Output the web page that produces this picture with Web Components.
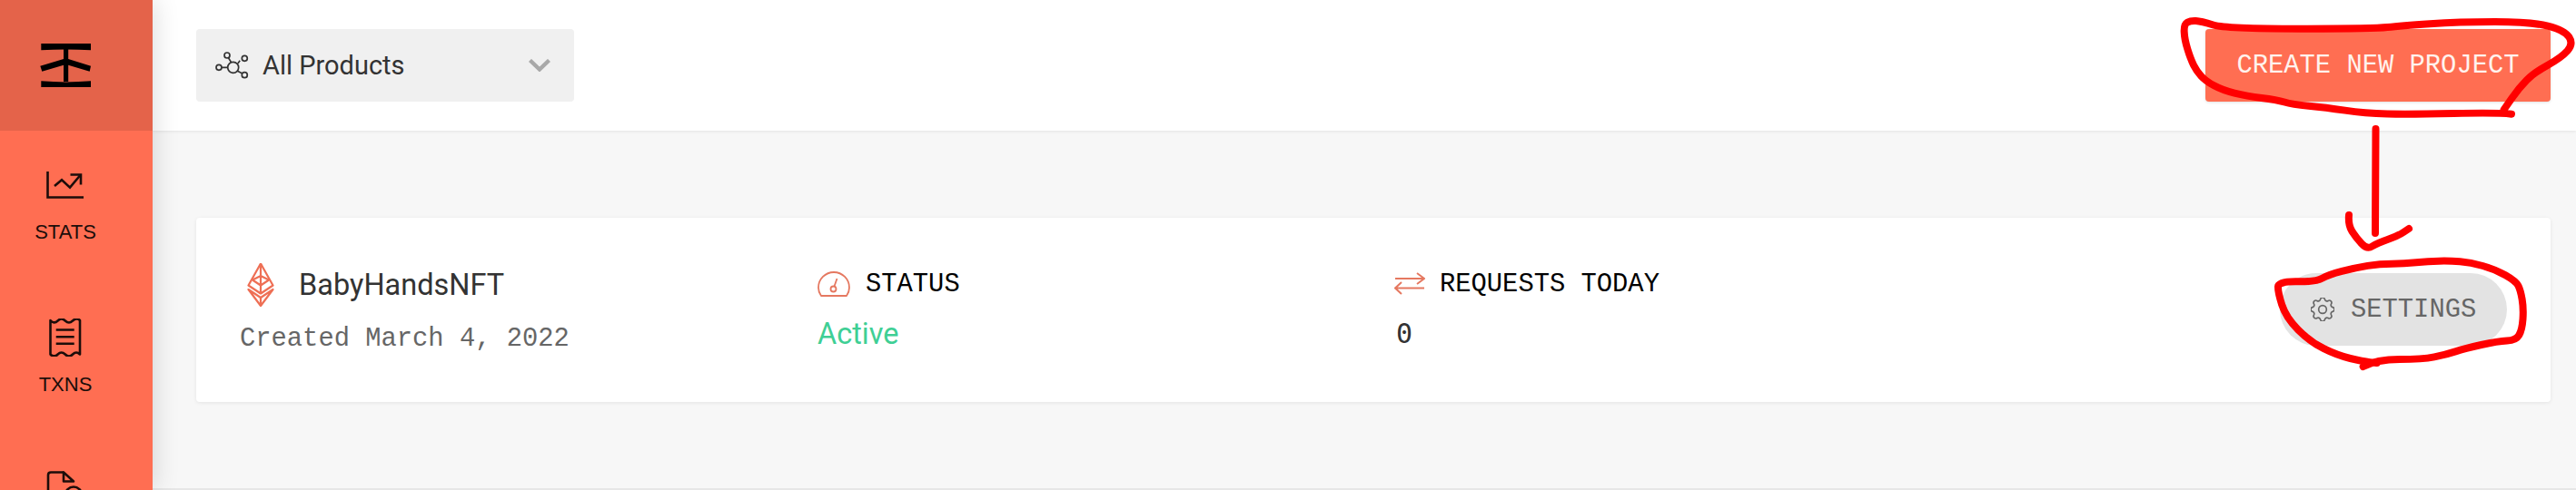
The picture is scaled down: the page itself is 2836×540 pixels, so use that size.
<!DOCTYPE html>
<html>
<head>
<meta charset="utf-8">
<title>Projects</title>
<style>
  html, body { margin: 0; height: 100%; overflow: hidden; background: #f7f7f7; }
  body { display: flex; font-family: "Roboto", "Liberation Sans", sans-serif; }
</style>
</head>
<body>
<side-bar>
  <nav-item label="STATS">
    <svg width="42" height="32" viewBox="51 188 42 32" fill="none" stroke="#1c0d0a" stroke-width="2.6">
      <path d="M52.5 189V217.5H92"/>
      <path d="M60 205l8-6.7 9 8.4 11-13.2"/>
      <path d="M77.5 192.5H89V203.5"/>
    </svg>
  </nav-item>
  <nav-item label="TXNS">
    <svg width="36" height="42" viewBox="55 351.5 36 42" fill="none" stroke="#1c0d0a" stroke-width="2.6" stroke-linejoin="round">
      <path d="M56.5 353.5Q60.5 358 64.6 354T72.8 354T81 354T89 353.5V391Q85 387 81 391T72.8 391T64.6 391T56.5 391Z"/>
      <path d="M62.7 364H82.7M62.7 371.7H82.7M62.7 379.3H82.7"/>
    </svg>
  </nav-item>
  <nav-item>
    <svg width="42" height="42" viewBox="49 519.5 42 42" fill="none" stroke="#1c0d0a" stroke-width="2.6" stroke-linejoin="round">
      <path d="M68 521H54q-3 0-3 3V560"/>
      <path d="M68 521V531H79Z"/>
      <circle cx="79" cy="546" r="9"/>
    </svg>
  </nav-item>
</side-bar>

<main-area>
  <top-bar>
    <product-select slot="left">All Products</product-select>
    <primary-button slot="right">CREATE NEW PROJECT</primary-button>
  </top-bar>
  <project-card created="Created March 4, 2022">BabyHandsNFT</project-card>
</main-area>

<red-marks></red-marks>

<script>
class SideBar extends HTMLElement {
    constructor() {
        super();
        this.attachShadow({ mode: "open" }).innerHTML = `
            <style>
                :host {
                    display: block;
                    flex: 0 0 168px;
                    height: 540px;
                    overflow: hidden;
                    background: #ff6e52;
                    position: relative;
                    z-index: 2;
                    box-shadow: 0 0 28px rgba(0, 0, 0, 0.16);
                }
                .logo {
                    height: 144px;
                    background: #e4634a;
                    display: flex;
                    align-items: center;
                    padding-right: 24px;
                    justify-content: center;
                }
            </style>
            <div class="logo">
                <svg width="57" height="48" viewBox="43 48 57 48" fill="#000">
                    <path d="M44.3 48H99V55.3Q71.5 53.5 44.3 55.3Z"/>
                    <path d="M69 54H74.2V90H69Z"/>
                    <path d="M69 65L43.3 72.7L45.3 78.7L69 71.7H74.2L97.7 78.7L99 72.7L74.2 65Z"/>
                    <path d="M44.3 89.3Q71.5 91.5 99 89.3V96H44.3Z"/>
                </svg>
            </div>
            <slot></slot>
        `;
    }
}

class NavItem extends HTMLElement {
    constructor() {
        super();
        const label = this.getAttribute("label");
        this.attachShadow({ mode: "open" }).innerHTML = `
            <style>
                :host {
                    display: block;
                    width: 144px;
                    height: 168px;
                    box-sizing: border-box;
                    padding-top: 36px;
                    font-family: "Liberation Sans", sans-serif;
                    font-size: 22px;
                    color: #1c0d0a;
                    text-align: center;
                }
                .icon {
                    height: 48px;
                    display: flex;
                    align-items: center;
                    justify-content: center;
                }
                .label { margin-top: 15px; line-height: 26px; }
            </style>
            <div class="icon"><slot></slot></div>
            ${label ? `<div class="label">${label}</div>` : ""}
        `;
    }
}

class MainArea extends HTMLElement {
    constructor() {
        super();
        this.attachShadow({ mode: "open" }).innerHTML = `
            <style>
                :host {
                    display: block;
                    flex: 1;
                    height: 540px;
                    box-sizing: border-box;
                    background: #f7f7f7;
                    border-bottom: 2px solid #e6e6e6;
                }
            </style>
            <slot></slot>
        `;
    }
}

class TopBar extends HTMLElement {
    constructor() {
        super();
        this.attachShadow({ mode: "open" }).innerHTML = `
            <style>
                :host {
                    display: flex;
                    justify-content: space-between;
                    align-items: center;
                    height: 144px;
                    box-sizing: border-box;
                    padding: 0 28px 0 48px;
                    background: #fff;
                    box-shadow: 0 1px 3px rgba(0, 0, 0, 0.08);
                }
            </style>
            <slot name="left"></slot>
            <slot name="right"></slot>
        `;
    }
}

class ProductSelect extends HTMLElement {
    constructor() {
        super();
        this.attachShadow({ mode: "open" }).innerHTML = `
            <style>
                :host {
                    display: flex;
                    align-items: center;
                    width: 416px;
                    height: 80px;
                    box-sizing: border-box;
                    padding: 0 26px 0 21px;
                    background: #f0f0f0;
                    border-radius: 4px;
                    color: #333;
                    font-size: 29px;
                }
                .text { flex: 1; margin-left: 15px; }
            </style>
            <svg width="37" height="30" viewBox="237 57 37 30" fill="none" stroke="#333" stroke-width="1.7">
                <circle cx="256.7" cy="74.3" r="6"/>
                <circle cx="250" cy="61" r="3"/>
                <circle cx="269.3" cy="64.3" r="3"/>
                <circle cx="269.3" cy="82.7" r="3"/>
                <circle cx="241" cy="74.3" r="3"/>
                <path d="M251.5 63.7L254.5 68.6M264.2 66.8L261.8 70M261.5 78.3L266.8 81M244 74.3H250.7"/>
            </svg>
            <span class="text"><slot></slot></span>
            <svg width="24" height="14" viewBox="0 0 24 14" fill="none" stroke="#a8a8a8" stroke-width="4.4">
                <path d="M1.5 1.5L12 11.5L22.5 1.5"/>
            </svg>
        `;
    }
}

class PrimaryButton extends HTMLElement {
    constructor() {
        super();
        this.attachShadow({ mode: "open" }).innerHTML = `
            <style>
                :host {
                    display: flex;
                    align-items: center;
                    justify-content: center;
                    width: 380px;
                    height: 80px;
                    background: #ff6e52;
                    border-radius: 4px;
                    color: #fff3ee;
                    font-family: "Liberation Mono", monospace;
                    font-size: 28.8px;
                    box-shadow: 0 1px 3px rgba(0, 0, 0, 0.12);
                }
            </style>
            <slot></slot>
        `;
    }
}

class StatBlock extends HTMLElement {
    constructor() {
        super();
        this.attachShadow({ mode: "open" }).innerHTML = `
            <style>
                :host { display: block; }
                .head {
                    display: flex;
                    align-items: center;
                    height: 32px;
                    padding-top: 7px;
                    color: #000;
                    font-family: "Liberation Mono", monospace;
                    font-size: 28.8px;
                }
                .value { margin-top: 23px; line-height: 32px; }
            </style>
            <div class="head"><slot name="icon"></slot>${this.getAttribute("label")}</div>
            <div class="value"><slot></slot></div>
        `;
    }
}

class ProjectCard extends HTMLElement {
    constructor() {
        super();
        this.attachShadow({ mode: "open" }).innerHTML = `
            <style>
                :host {
                    display: grid;
                    grid-template-columns: 636px 635px 1fr auto;
                    align-items: start;
                    height: 203px;
                    box-sizing: border-box;
                    margin: 96px 28px 0 48px;
                    padding: 50px 48px 0 48px;
                    background: #fff;
                    border-radius: 4px;
                    box-shadow: 0 1px 4px rgba(0, 0, 0, 0.08);
                }
                .name {
                    display: flex;
                    align-items: center;
                    height: 48px;
                    padding-left: 8px;
                    color: #333;
                    font-size: 32.5px;
                }
                .name svg { margin-right: 27px; }
                .created {
                    margin-top: 20px;
                    color: #666;
                    font-family: "Liberation Mono", monospace;
                    font-size: 28.8px;
                    line-height: 32px;
                }
                .active { color: #3fcf95; font-size: 32.5px; }
                .zero { color: #333; font-family: "DejaVu Sans Mono", monospace; font-size: 30px; margin-left: 2px; }
                .settings {
                    display: flex;
                    align-items: center;
                    gap: 18px;
                    width: 250px;
                    height: 80px;
                    box-sizing: border-box;
                    padding-left: 34px;
                    margin-top: 11px;
                    background: #e3e3e3;
                    border-radius: 40px;
                    color: #666;
                    font-family: "Liberation Mono", monospace;
                    font-size: 28.8px;
                }
            </style>
            <div>
                <div class="name">
                    <svg width="30" height="48" viewBox="272 291.5 30 48" fill="none" stroke="#ee6f55" stroke-width="2.2" stroke-linejoin="round">
                        <path d="M287 292L300.5 316L287 325L273.5 316Z"/>
                        <path d="M287 292V325M278 310L287 305.5L296 310M278 310L287 316M296 310L287 316"/>
                        <path d="M273.5 320.5L287 329.5L300.5 320.5L287 338.5Z"/>
                        <path d="M287 329.5V338.5"/>
                    </svg>
                    <span><slot></slot></span>
                </div>
                <div class="created">${this.getAttribute("created")}</div>
            </div>
            <stat-block label="STATUS">
                <svg slot="icon" style="margin-right:17px" width="36" height="28" viewBox="900 296 36 28" fill="none" stroke="#e57860" stroke-width="1.8" stroke-linejoin="round">
                    <path d="M904 323Q901 319 901 314A17 17 0 0 1 935 314Q935 319 932 323Z"/>
                    <circle cx="917.5" cy="315.5" r="3"/>
                    <path d="M918.5 312.5L921.5 304"/>
                </svg>
                <span class="active">Active</span>
            </stat-block>
            <stat-block label="REQUESTS TODAY">
                <svg slot="icon" style="margin-right:16px" width="34" height="26" viewBox="1535 297 34 26" fill="none" stroke="#e57860" stroke-width="2">
                    <path d="M1536 304H1568M1560 298L1568 304L1560 310"/>
                    <path d="M1568 314.5H1536M1543 308L1536 314.5L1543 321"/>
                </svg>
                <span class="zero">0</span>
            </stat-block>
            <div class="settings">
                <svg width="26" height="26" viewBox="3 3 18 18" fill="none" stroke="#666" stroke-width="1.15">
                    <path d="M10.325 4.317c.426-1.756 2.924-1.756 3.35 0a1.724 1.724 0 002.573 1.066c1.543-.94 3.31.826 2.37 2.37a1.724 1.724 0 001.065 2.572c1.756.426 1.756 2.924 0 3.35a1.724 1.724 0 00-1.066 2.573c.94 1.543-.826 3.31-2.37 2.37a1.724 1.724 0 00-2.572 1.065c-.426 1.756-2.924 1.756-3.35 0a1.724 1.724 0 00-2.573-1.066c-1.543.94-3.31-.826-2.37-2.37a1.724 1.724 0 00-1.065-2.572c-1.756-.426-1.756-2.924 0-3.35a1.724 1.724 0 001.066-2.573c-.94-1.543.826-3.31 2.37-2.37.996.608 2.296.07 2.572-1.065z"/>
                    <circle cx="12" cy="12" r="3"/>
                </svg>
                <span>SETTINGS</span>
            </div>
        `;
    }
}

// the hand drawn red scribbles sit on top of everything
class RedMarks extends HTMLElement {
    constructor() {
        super();
        const toFull = (pts, ox, oy) => pts.map(([x, y]) => [ox + x / 3, oy + y / 3]);
        const smooth = (pts) => {
            let d = `M${pts[0][0]} ${pts[0][1]}`;
            for (let i = 1; i < pts.length - 1; i++) {
                const mx = (pts[i][0] + pts[i + 1][0]) / 2;
                const my = (pts[i][1] + pts[i + 1][1]) / 2;
                d += `Q${pts[i][0]} ${pts[i][1]} ${mx} ${my}`;
            }
            const last = pts[pts.length - 1];
            return d + `L${last[0]} ${last[1]}`;
        };
        const ring1 = toFull([
            [1215,377],[1170,372],[880,378],[730,375],[600,355],[490,345],[440,330],[340,318],
            [260,298],[205,268],[175,235],[155,195],[135,130],[133,80],[155,68],[190,70],[270,95],
            [760,95],[850,85],[1040,72],[1280,72],[1390,100],[1420,145],[1380,190],[1290,240],
            [1240,290],[1190,362]
        ], 2360, 0);
        const ring2 = toFull([
            [425,432],[470,408],[620,408],[700,392],[760,372],[870,348],[930,345],[950,310],
            [955,240],[945,180],[930,150],[860,110],[780,88],[710,82],[640,84],[560,92],[480,92],
            [400,105],[310,128],[270,152],[145,150],[143,185],[170,270],[250,350],[340,395],
            [425,415],[470,420]
        ], 2460, 260);
        const head = [[2586,237],[2585,248],[2594,262],[2606,275],[2617,268],[2640,260],[2652,252]];
        this.attachShadow({ mode: "open" }).innerHTML = `
            <style>
                :host {
                    position: absolute;
                    inset: 0;
                    z-index: 5;
                    pointer-events: none;
                }
                svg { display: block; }
                path { fill: none; stroke: #f00; stroke-width: 8; stroke-linecap: round; stroke-linejoin: round; }
            </style>
            <svg width="2836" height="540" viewBox="0 0 2836 540">
                <path d="${smooth(ring1)}"/>
                <path d="M2615.5 142L2615 257"/>
                <path d="${smooth(head)}"/>
                <path d="${smooth(ring2)}"/>
            </svg>
        `;
    }
}

customElements.define("side-bar", SideBar);
customElements.define("nav-item", NavItem);
customElements.define("main-area", MainArea);
customElements.define("top-bar", TopBar);
customElements.define("product-select", ProductSelect);
customElements.define("primary-button", PrimaryButton);
customElements.define("stat-block", StatBlock);
customElements.define("project-card", ProjectCard);
customElements.define("red-marks", RedMarks);
</script>
</body>
</html>
